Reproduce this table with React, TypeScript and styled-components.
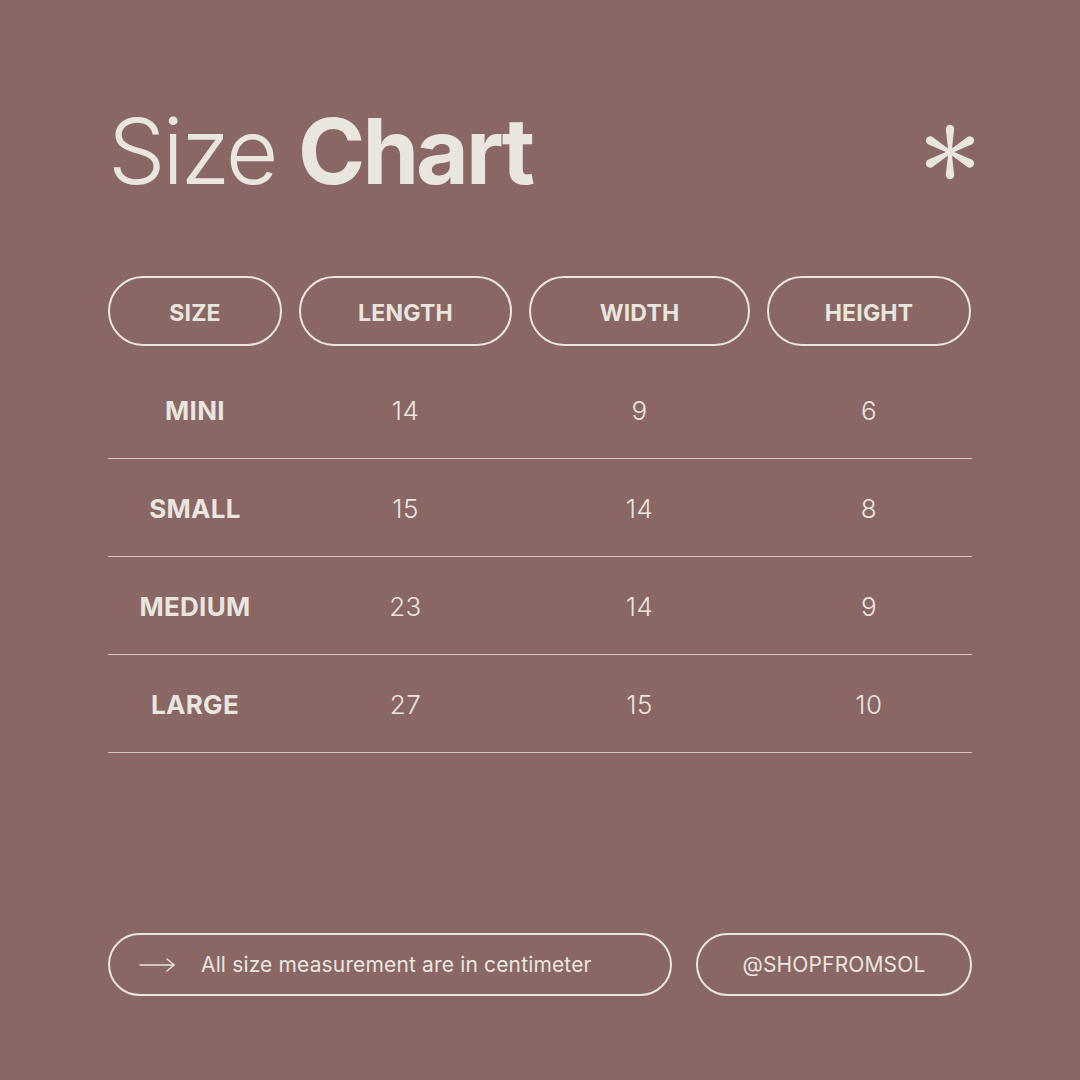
import styled, { createGlobalStyle } from "styled-components";

const bg = "#8a6765";
const ink = "#e9e5df";

const GlobalStyle = createGlobalStyle`
  html, body {
    margin: 0;
    padding: 0;
    background: ${bg};
  }
  * {
    box-sizing: border-box;
  }
`;

const Page = styled.div`
  width: 1080px;
  height: 1080px;
  background: ${bg};
  color: ${ink};
  font-family: Inter, "Liberation Sans", sans-serif;
  display: flex;
  flex-direction: column;
  padding: 106px 108px 84px 108px;
`;

const TitleRow = styled.div`
  display: flex;
  align-items: flex-start;
  justify-content: space-between;
  height: 170px;
`;

const Title = styled.h1`
  margin: 0;
  font-size: 91px;
  line-height: 1;
  font-weight: 300;
  letter-spacing: -3px;

  strong {
    font-weight: 700;
    letter-spacing: -3px;
  }
`;

const Star = styled.svg`
  width: 58px;
  height: 58px;
  margin-top: 17px;
  margin-right: -7px;
`;

const Grid = styled.div`
  display: grid;
  grid-template-columns: 174px 213px 221px 204px;
  column-gap: 17px;
`;

const HeaderPill = styled.div`
  height: 70px;
  border: 2px solid ${ink};
  border-radius: 35px;
  display: flex;
  align-items: center;
  justify-content: center;
  padding-top: 3px;
  font-size: 23px;
  font-weight: 700;
  letter-spacing: 0.2px;
`;

const Table = styled.div`
  margin-top: 15px;
`;

const Row = styled(Grid)`
  height: 98px;
  border-bottom: 1px solid rgba(233, 229, 223, 0.75);
  align-items: center;
`;

const Cell = styled.div<{ $label?: boolean }>`
  text-align: center;
  font-size: 26px;
  font-weight: ${(p) => (p.$label ? 700 : 300)};
  letter-spacing: ${(p) => (p.$label ? "0.3px" : "0.5px")};
  padding-top: 2px;
`;

const Footer = styled.div`
  margin-top: auto;
  display: flex;
  gap: 24px;
`;

const NotePill = styled.div`
  width: 564px;
  height: 63px;
  border: 2px solid ${ink};
  border-radius: 32px;
  display: flex;
  align-items: center;
  padding-left: 29px;
  gap: 25px;
  font-size: 21px;
  font-weight: 400;
  letter-spacing: 0.15px;
`;

const HandlePill = styled.div`
  flex: 1;
  height: 63px;
  border: 2px solid ${ink};
  border-radius: 32px;
  display: flex;
  align-items: center;
  justify-content: center;
  font-size: 21px;
  font-weight: 400;
  letter-spacing: 0.15px;
`;

const Arrow = () => (
  <svg width="37" height="16" viewBox="0 0 37 16" fill="none">
    <path d="M1 8 H35" stroke={ink} strokeWidth="1.4" strokeLinecap="round" />
    <path d="M28 2 L35 8 L28 14" stroke={ink} strokeWidth="1.4" strokeLinecap="round" strokeLinejoin="round" />
  </svg>
);

const Asterisk = () => (
  <Star viewBox="-29 -29 58 58">
    {[0, 60, 120, 180, 240, 300].map((a) => (
      <path
        key={a}
        transform={`rotate(${a})`}
        d="M -1.6 0 L -4.2 -23 A 4.2 4.2 0 0 1 4.2 -23 L 1.6 0 Z"
        fill={ink}
      />
    ))}
  </Star>
);

const headers = ["SIZE", "LENGTH", "WIDTH", "HEIGHT"];

const rows = [
  ["MINI", "14", "9", "6"],
  ["SMALL", "15", "14", "8"],
  ["MEDIUM", "23", "14", "9"],
  ["LARGE", "27", "15", "10"],
];

const App = () => {
  return (
    <Page>
      <GlobalStyle />
      <TitleRow>
        <Title>
          Size <strong>Chart</strong>
        </Title>
        <Asterisk />
      </TitleRow>
      <Grid>
        {headers.map((h) => (
          <HeaderPill key={h}>{h}</HeaderPill>
        ))}
      </Grid>
      <Table>
        {rows.map((r) => (
          <Row key={r[0]}>
            {r.map((v, i) => (
              <Cell key={i} $label={i === 0}>
                {v}
              </Cell>
            ))}
          </Row>
        ))}
      </Table>
      <Footer>
        <NotePill>
          <Arrow />
          All size measurement are in centimeter
        </NotePill>
        <HandlePill>@SHOPFROMSOL</HandlePill>
      </Footer>
    </Page>
  );
};

export default App;
